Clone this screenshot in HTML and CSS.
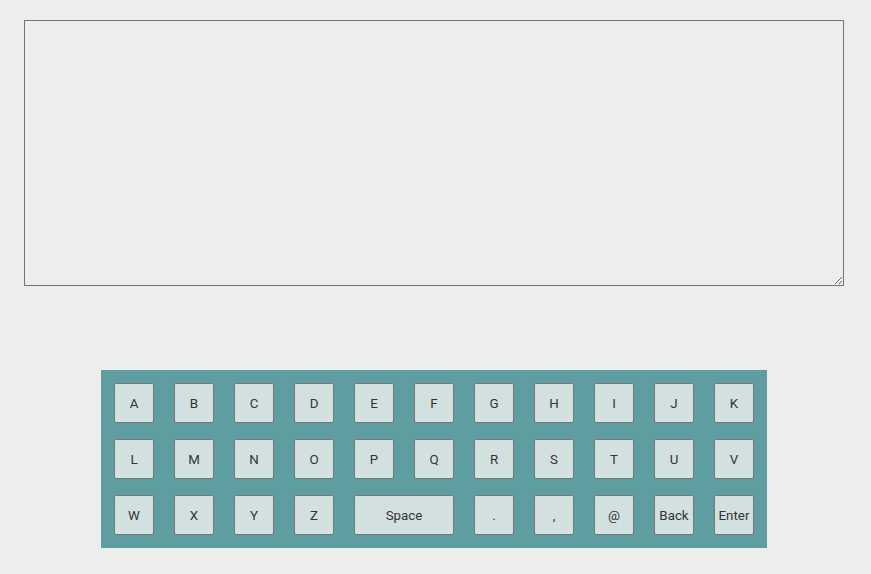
FILE: index.html
```html
<!DOCTYPE html>
<html>
<head>
<meta charset="utf-8">
<link rel="stylesheet" href="styles.css">
</head>
<body>
<div class="page">
  <textarea class="editor" autofocus></textarea>
  <div class="keyboard">
    <div class="row">
      <button class="key">A</button><button class="key">B</button><button class="key">C</button><button class="key">D</button><button class="key">E</button><button class="key">F</button><button class="key">G</button><button class="key">H</button><button class="key">I</button><button class="key">J</button><button class="key">K</button>
    </div>
    <div class="row">
      <button class="key">L</button><button class="key">M</button><button class="key">N</button><button class="key">O</button><button class="key">P</button><button class="key">Q</button><button class="key">R</button><button class="key">S</button><button class="key">T</button><button class="key">U</button><button class="key">V</button>
    </div>
    <div class="row">
      <button class="key">W</button><button class="key">X</button><button class="key">Y</button><button class="key">Z</button><button class="key wide">Space</button><button class="key">.</button><button class="key">,</button><button class="key">@</button><button class="key">Back</button><button class="key">Enter</button>
    </div>
  </div>
</div>
</body>
</html>
```

FILE: styles.css
```css
html, body {
  margin: 0;
  padding: 0;
  background: #ededed;
}
.page {
  padding: 20px 0 0 24px;
  display: flex;
  flex-direction: column;
  align-items: flex-start;
}
.editor {
  box-sizing: border-box;
  width: 820px;
  height: 266px;
  margin: 0;
  padding: 0;
  border: 1px solid #767676;
  background: #ededed;
  font-family: Roboto, "Liberation Sans", Arial, sans-serif;
  font-size: 19px;
  caret-color: #555;
  outline: none;
  display: block;
}
.keyboard {
  margin: 84px 0 0 77px;
  width: 666px;
  box-sizing: border-box;
  padding: 13px;
  background: #5f9ea0;
  display: flex;
  flex-direction: column;
  gap: 16px;
}
.row {
  display: flex;
  gap: 20px;
}
.key {
  box-sizing: border-box;
  width: 40px;
  height: 40px;
  margin: 0;
  padding: 0;
  border: 1px solid #767676;
  border-radius: 2px;
  background: #d3e0e0;
  color: #333;
  font-family: Roboto, "Liberation Sans", Arial, sans-serif;
  font-size: 13.333px;
  text-align: center;
}
.key.wide {
  width: 100px;
}
```
